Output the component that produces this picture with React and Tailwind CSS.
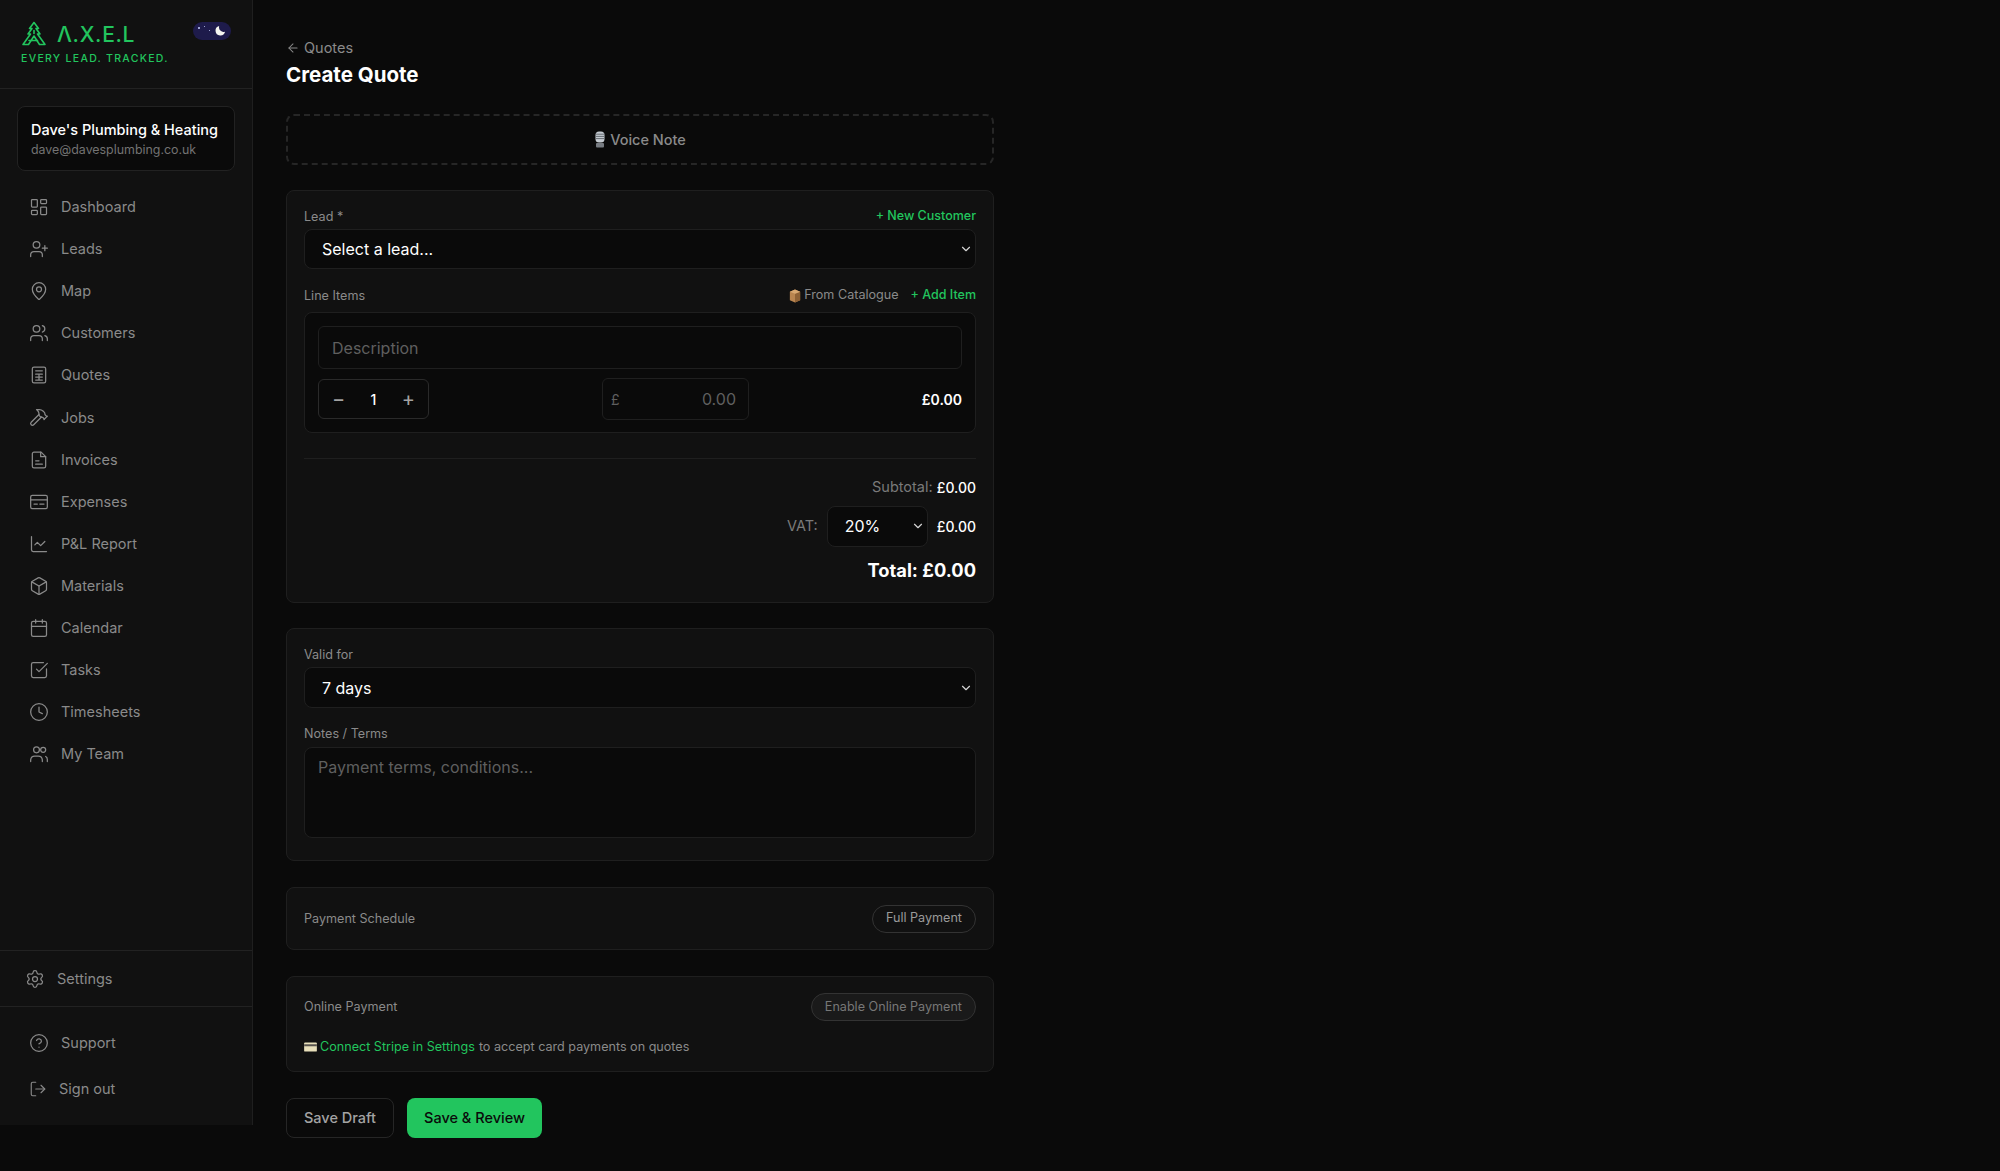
import { useState } from "react";
import {
  LayoutDashboard,
  UserPlus,
  MapPin,
  Users,
  Hammer,
  ChartLine,
  Box,
  Calendar,
  SquareCheckBig,
  Clock,
  Settings,
  CircleHelp,
  LogOut,
  ChevronDown,
  ArrowLeft,
} from "lucide-react";

function QuoteIcon(props) {
  return (
    <svg viewBox="0 0 24 24" fill="none" stroke="currentColor" strokeWidth="1.5" strokeLinecap="round" strokeLinejoin="round" {...props}>
      <rect x="4" y="2.5" width="16" height="19" rx="2" />
      <path d="M8 7h8M8 11h8M8 14.5h8M8 18h8M12 11v7" />
    </svg>
  );
}

function InvoiceIcon(props) {
  return (
    <svg viewBox="0 0 24 24" fill="none" stroke="currentColor" strokeWidth="1.5" strokeLinecap="round" strokeLinejoin="round" {...props}>
      <path d="M6 2.5h8.5L20 8v11.5a2 2 0 0 1-2 2H6a2 2 0 0 1-2-2v-15a2 2 0 0 1 2-2z" />
      <path d="M14 2.5V8h6M8 13h4M8 17h8" />
    </svg>
  );
}

function ExpenseIcon(props) {
  return (
    <svg viewBox="0 0 24 24" fill="none" stroke="currentColor" strokeWidth="1.5" strokeLinecap="round" strokeLinejoin="round" {...props}>
      <rect x="2" y="4" width="20" height="16" rx="2" />
      <path d="M2 9.5h20M6 14.5h4M13 14.5h5" />
    </svg>
  );
}

function TeamIcon(props) {
  return (
    <svg viewBox="0 0 24 24" fill="none" stroke="currentColor" strokeWidth="1.5" strokeLinecap="round" strokeLinejoin="round" {...props}>
      <circle cx="9" cy="7" r="3.5" />
      <circle cx="17" cy="7" r="3" />
      <path d="M2 21v-2a5 5 0 0 1 5-4.5h4a5 5 0 0 1 5 4.5v2M20 15c1.2.6 2 2 2 3.5V21" />
    </svg>
  );
}

function Logo() {
  return (
    <svg viewBox="0 0 26 26" className="w-[26px] h-[26px] text-[#22c55e]" fill="none" stroke="currentColor" strokeWidth="1.6" strokeLinejoin="round" strokeLinecap="round">
      <path d="M13 1.5 8.5 7.5h2.5L7 13h2.5L2 23.5h5.5L13 15l5.5 8.5H24L16.5 13H19l-4-5.5h2.5z" />
      <path d="M8 19.5h8.5M13 9.5v3" />
    </svg>
  );
}

function ThemeToggle() {
  return (
    <div className="relative w-[38px] h-[18px] mt-px rounded-full bg-[#1e1b4b] shrink-0">
      <span className="absolute left-[5px] top-[5px] w-[1.5px] h-[1.5px] rounded-full bg-[#c7d2fe]" />
      <span className="absolute left-[11px] top-[4px] w-px h-px rounded-full bg-[#c7d2fe]" />
      <span className="absolute left-[16px] top-[8px] w-px h-px rounded-full bg-[#c7d2fe]" />
      <svg viewBox="0 0 24 24" className="absolute right-[4px] top-[2px] w-[13px] h-[13px]" fill="#f5f5f0">
        <path d="M20.5 14.5A9 9 0 0 1 9.5 3.5a9 9 0 1 0 11 11z" />
      </svg>
    </div>
  );
}

function MicEmoji() {
  return (
    <svg viewBox="0 0 12 17" className="w-[12px] h-[17px] shrink-0">
      <rect x="1.5" y="0.5" width="9" height="11" rx="3.5" fill="#c4cad0" />
      <path d="M2 3.2h8M2 5.4h8M2 7.6h8" stroke="#5b6268" strokeWidth="0.9" />
      <rect x="2" y="12" width="8" height="4.5" rx="1" fill="#777c82" />
    </svg>
  );
}

function BoxEmoji() {
  return (
    <svg viewBox="0 0 14 16" className="w-[12px] h-[14px] shrink-0">
      <path d="M7 0.5 13 3v10l-6 2.5L1 13V3z" fill="#b98550" />
      <path d="M7 5.5 13 3v10l-6 2.5z" fill="#8f6236" />
      <path d="M7 0.5 13 3 7 5.5 1 3z" fill="#d8a871" />
    </svg>
  );
}

function CardEmoji() {
  return (
    <svg viewBox="0 0 14 11" className="w-[13px] h-[10px] shrink-0">
      <rect x="0" y="0.5" width="14" height="10" rx="1" fill="#e8dfba" />
      <rect x="0" y="2.5" width="14" height="2.2" fill="#57534e" />
    </svg>
  );
}

const navItems = [
  { label: "Dashboard", icon: LayoutDashboard },
  { label: "Leads", icon: UserPlus },
  { label: "Map", icon: MapPin },
  { label: "Customers", icon: Users },
  { label: "Quotes", icon: QuoteIcon },
  { label: "Jobs", icon: Hammer },
  { label: "Invoices", icon: InvoiceIcon },
  { label: "Expenses", icon: ExpenseIcon },
  { label: "P&L Report", icon: ChartLine },
  { label: "Materials", icon: Box },
  { label: "Calendar", icon: Calendar },
  { label: "Tasks", icon: SquareCheckBig },
  { label: "Timesheets", icon: Clock },
  { label: "My Team", icon: TeamIcon },
];

function Sidebar() {
  return (
    <aside className="w-[253px] h-[1125px] shrink-0 bg-[#111111] border-r border-[#1f1f1f] flex flex-col">
      <div className="h-[89px] border-b border-[#222222] pl-[21px] pr-[21px] pt-[21px]">
        <div className="flex items-start justify-between">
          <div className="flex items-center gap-[10px] h-[26px]">
            <Logo />
            <span className="text-[#22c55e] text-[21px] leading-none tracking-[0.7px] font-medium">Λ.X.E.L</span>
          </div>
          <ThemeToggle />
        </div>
        <p className="text-[#22c55e] text-[10.5px] leading-[14px] font-medium tracking-[1.3px] mt-[5px]">EVERY LEAD. TRACKED.</p>
      </div>

      <div className="mx-[17px] mt-[17px] h-[65px] rounded-lg border border-[#222222] bg-[#0a0a0a] pl-[13px] pt-[13px]">
        <p className="text-white text-[14.5px] leading-[20px] font-medium whitespace-nowrap">Dave's Plumbing &amp; Heating</p>
        <p className="text-[#737373] text-[12.4px] leading-[17px] mt-px">dave@davesplumbing.co.uk</p>
      </div>

      <nav className="mt-[15px] flex flex-col">
        {navItems.map((item) => (
          <a key={item.label} className="h-[42.08px] flex items-center pl-[29px] gap-[12px] text-[#8a8a8a] text-[14.5px]">
            <item.icon className="w-5 h-5" strokeWidth={1.5} />
            <span>{item.label}</span>
          </a>
        ))}
      </nav>

      <div className="mt-auto">
        <div className="h-[56px] border-t border-[#222222] flex items-center pl-[25px] gap-[12px] text-[#8a8a8a] text-[14.5px]">
          <Settings className="w-5 h-5" strokeWidth={1.5} />
          <span>Settings</span>
        </div>
        <div className="border-t border-[#222222] pt-[15px] h-[119px]">
          <div className="h-[42px] flex items-center pl-[29px] gap-[12px] text-[#8a8a8a] text-[14.5px]">
            <CircleHelp className="w-5 h-5" strokeWidth={1.5} />
            <span>Support</span>
          </div>
          <div className="h-[42px] mt-[4px] flex items-center pl-[29px] gap-[12px] text-[#8a8a8a] text-[14.5px]">
            <LogOut className="w-[18px] h-[18px]" strokeWidth={1.5} />
            <span>Sign out</span>
          </div>
        </div>
      </div>
    </aside>
  );
}

function Select({ value, options, className }) {
  return (
    <div className={`relative ${className}`}>
      <select
        defaultValue={value}
        className="appearance-none w-full h-full bg-[#0a0a0a] border border-[#1f1f1f] rounded-lg pl-[17px] text-white text-[16px] outline-none"
      >
        {options.map((o) => (
          <option key={o}>{o}</option>
        ))}
      </select>
      <ChevronDown className="absolute right-[3px] top-1/2 -translate-y-1/2 w-[14px] h-[14px] text-[#d4d4d4] pointer-events-none" strokeWidth={2} />
    </div>
  );
}

function Label({ children }) {
  return <label className="text-[#8a8a8a] text-[12.6px] leading-[16px]">{children}</label>;
}

export default function App() {
  const [qty, setQty] = useState(1);

  return (
    <div className="min-h-[1171px] bg-[#0a0a0a] flex font-['Inter',sans-serif]">
      <Sidebar />
      <main className="pl-[33px] pb-[34px] w-[741px]">
        <a className="mt-[39px] h-[18px] flex items-center gap-[4px] text-[#8a8a8a] text-[14.5px]">
          <ArrowLeft className="w-[14px] h-[14px]" strokeWidth={1.75} />
          Quotes
        </a>
        <h1 className="mt-[4px] text-white text-[20.5px] leading-[28px] font-bold">Create Quote</h1>

        <button className="mt-[25px] w-full h-[51px] rounded-lg border-2 border-dashed border-[#262626] flex items-center justify-center gap-[4px] text-[#8a8a8a] text-[14.5px] font-medium">
          <MicEmoji />
          Voice Note
        </button>

        <section className="mt-[25px] h-[413px] rounded-lg border border-[#1f1f1f] bg-[#111111] px-[17px] pt-[17px]">
          <div className="flex justify-between items-center h-[17px]">
            <Label>Lead *</Label>
            <span className="text-[#22c55e] text-[12.5px] font-medium">+ New Customer</span>
          </div>
          <Select value="Select a lead..." options={["Select a lead..."]} className="mt-[4px] h-[40px]" />

          <div className="mt-[18px] flex justify-between items-center h-[17px]">
            <Label>Line Items</Label>
            <div className="flex items-center">
              <BoxEmoji />
              <span className="ml-[3px] text-[#8a8a8a] text-[12.6px]">From Catalogue</span>
              <span className="ml-[12px] text-[#22c55e] text-[12.5px] font-medium">+ Add Item</span>
            </div>
          </div>

          <div className="mt-[8px] h-[121px] rounded-lg border border-[#1f1f1f] bg-[#0a0a0a] px-[13px] pt-[13px]">
            <input
              placeholder="Description"
              className="w-full h-[43px] bg-[#0a0a0a] border border-[#1f1f1f] rounded-md px-[13px] text-white text-[16px] placeholder:text-[#5f5f5f] outline-none"
            />
            <div className="mt-[9px] flex items-center">
              <div className="w-[111px] h-[40px] rounded-md border border-[#2a2a2a] flex items-center justify-between px-[13px] text-[14px]">
                <button onClick={() => setQty(Math.max(1, qty - 1))} className="text-[#a3a3a3] text-[20px] leading-none">−</button>
                <span className="text-white font-medium">{qty}</span>
                <button onClick={() => setQty(qty + 1)} className="text-[#a3a3a3] text-[20px] leading-none">+</button>
              </div>
              <div className="relative w-[147px] h-[42px] ml-[173px]">
                <span className="absolute left-[9px] top-1/2 -translate-y-1/2 text-[#5f5f5f] text-[14px]">£</span>
                <input
                  placeholder="0.00"
                  className="w-full h-full bg-[#0a0a0a] border border-[#1f1f1f] rounded-md pl-[24px] pr-[12px] text-right text-white text-[16px] placeholder:text-[#5f5f5f] outline-none"
                />
              </div>
              <span className="flex-1 text-right text-white text-[14px] font-semibold">£0.00</span>
            </div>
          </div>

          <div className="mt-[25px] border-t border-[#1f1f1f] pt-[17px] flex flex-col items-end">
            <div className="h-[22px] flex items-center gap-[4px] text-[14.5px]">
              <span className="text-[#7a7a7a]">Subtotal:</span>
              <span className="text-white text-[14px] font-medium">£0.00</span>
            </div>
            <div className="mt-[8px] h-[40px] flex items-center">
              <span className="text-[#7a7a7a] text-[14.5px] mr-[9px]">VAT:</span>
              <Select value="20%" options={["20%", "5%", "0%"]} className="w-[101px] h-[41px]" />
              <span className="ml-[9px] text-white text-[14px] font-medium">£0.00</span>
            </div>
            <div className="mt-[10px] text-white text-[18.3px] leading-[28px] font-bold">Total: £0.00</div>
          </div>
        </section>

        <section className="mt-[25px] h-[233px] rounded-lg border border-[#1f1f1f] bg-[#111111] px-[17px] pt-[17px]">
          <div className="h-[17px] flex items-center">
            <Label>Valid for</Label>
          </div>
          <Select value="7 days" options={["7 days", "14 days", "30 days"]} className="mt-[4px] h-[41px]" />
          <div className="mt-[17px] h-[17px] flex items-center">
            <Label>Notes / Terms</Label>
          </div>
          <textarea
            placeholder="Payment terms, conditions..."
            className="block mt-[5px] w-full h-[91px] resize-none bg-[#0a0a0a] border border-[#1f1f1f] rounded-lg px-[13px] py-[9px] text-white text-[16px] leading-[20px] placeholder:text-[#5f5f5f] outline-none"
          />
        </section>

        <section className="mt-[26px] h-[63px] rounded-lg border border-[#1f1f1f] bg-[#111111] px-[17px] flex items-center justify-between">
          <Label>Payment Schedule</Label>
          <button className="h-[28px] px-[13px] rounded-full border border-[#333333] bg-[#111111] text-[#9a9a9a] text-[12.6px]">Full Payment</button>
        </section>

        <section className="mt-[26px] h-[96px] rounded-lg border border-[#1f1f1f] bg-[#111111] px-[17px] pt-[16px]">
          <div className="flex items-center justify-between">
            <Label>Online Payment</Label>
            <button className="h-[28px] px-[13px] rounded-full border border-[#333333] bg-[#1a1a1a] text-[#777777] text-[12.6px]">Enable Online Payment</button>
          </div>
          <p className="mt-[16px] flex items-center text-[#8a8a8a] text-[12.6px] leading-[20px]">
            <CardEmoji />
            <span className="ml-[3px] text-[#22c55e]">Connect Stripe in Settings</span>
            <span className="ml-[4px]">to accept card payments on quotes</span>
          </p>
        </section>

        <div className="mt-[26px] flex gap-[13px]">
          <button className="w-[108px] h-[40px] rounded-lg border border-[#262626] text-[#a3a3a3] text-[14.5px] font-medium">Save Draft</button>
          <button className="w-[135px] h-[40px] rounded-lg bg-[#22c55e] text-[#0a0a0a] text-[14.5px] font-medium">Save &amp; Review</button>
        </div>
      </main>
    </div>
  );
}
